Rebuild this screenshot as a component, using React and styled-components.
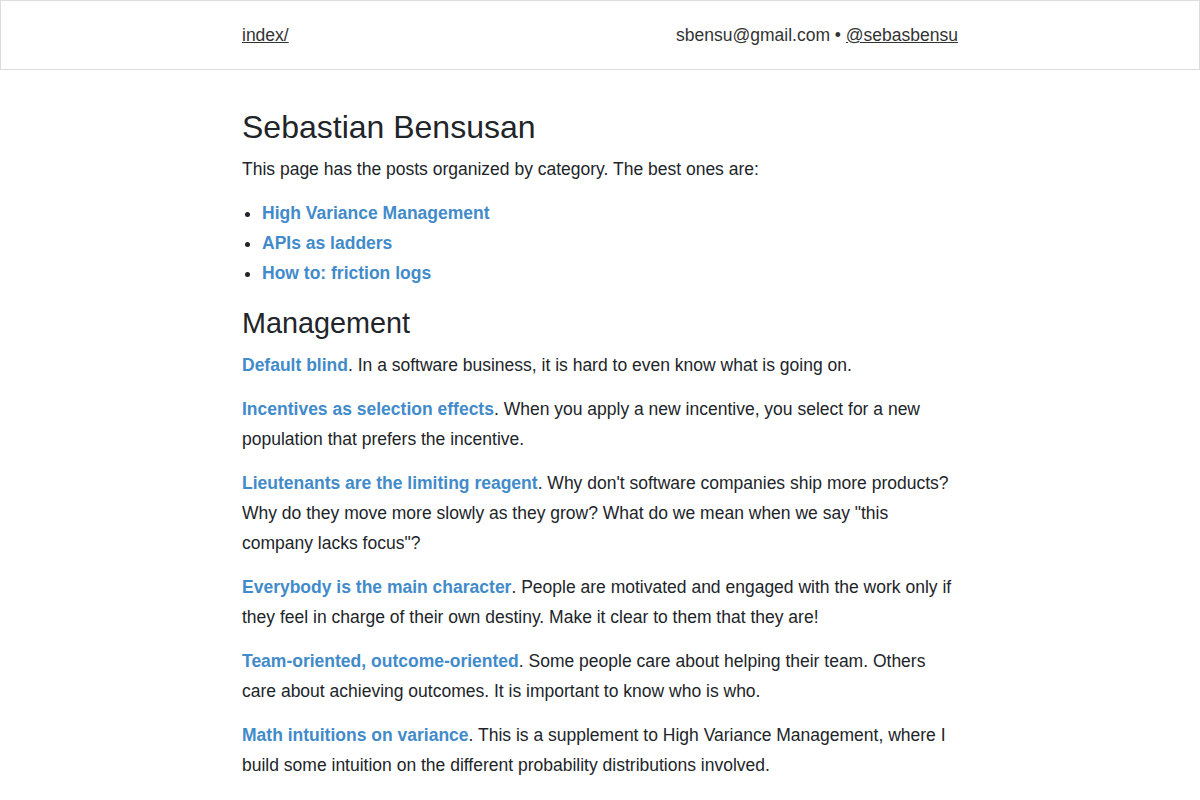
import React from 'react'
import styled, { createGlobalStyle } from 'styled-components'

const posts = [
  {
    title: 'Default blind',
    text: 'In a software business, it is hard to even know what is going on.',
  },
  {
    title: 'Incentives as selection effects',
    text: 'When you apply a new incentive, you select for a new population that prefers the incentive.',
  },
  {
    title: 'Lieutenants are the limiting reagent',
    text: 'Why don\'t software companies ship more products? Why do they move more slowly as they grow? What do we mean when we say "this company lacks focus"?',
  },
  {
    title: 'Everybody is the main character',
    text: 'People are motivated and engaged with the work only if they feel in charge of their own destiny. Make it clear to them that they are!',
  },
  {
    title: 'Team-oriented, outcome-oriented',
    text: 'Some people care about helping their team. Others care about achieving outcomes. It is important to know who is who.',
  },
  {
    title: 'Math intuitions on variance',
    text: 'This is a supplement to High Variance Management, where I build some intuition on the different probability distributions involved.',
  },
]

const best = ['High Variance Management', 'APIs as ladders', 'How to: friction logs']

function App() {
  return (
    <>
      <GlobalStyle />
      <Header>
        <HeaderInner>
          <NavLink href="#">index/</NavLink>
          <Contact>
            sbensu@gmail.com • <NavLink href="#">@sebasbensu</NavLink>
          </Contact>
        </HeaderInner>
      </Header>

      <Main>
        <Title>Sebastian Bensusan</Title>
        <Para>This page has the posts organized by category. The best ones are:</Para>
        <BestList>
          {best.map((b) => (
            <li key={b}>
              <PostLink href="#">{b}</PostLink>
            </li>
          ))}
        </BestList>

        <Section>Management</Section>
        {posts.map((p) => (
          <Para key={p.title}>
            <PostLink href="#">{p.title}</PostLink>. {p.text}
          </Para>
        ))}
      </Main>
    </>
  )
}

export default App

const GlobalStyle = createGlobalStyle`
    body {
        margin: 0;
        background: #fff;
        color: #212529;
        font-family: "Liberation Sans", Arial, Helvetica, sans-serif;
        font-size: 17.5px;
        line-height: 30px;
    }
`

const Header = styled.header`
    height: 68px;
    border: 1px solid #dcdcdc;
    display: flex;
    align-items: center;
`

const HeaderInner = styled.div`
    width: 716px;
    margin: 0 auto;
    display: flex;
    justify-content: space-between;
    align-items: center;
    color: #333;
`

const NavLink = styled.a`
    color: #333;
    text-decoration: underline;
`

const Contact = styled.div``

const Main = styled.main`
    width: 716px;
    margin: 0 auto;
    padding-top: 38px;
`

const Title = styled.h1`
    font-size: 32px;
    font-weight: 400;
    line-height: 38px;
    margin: 0 0 8px;
`

const Section = styled.h2`
    font-size: 28.8px;
    font-weight: 400;
    line-height: 34px;
    margin: 18px 0 10px;
`

const Para = styled.p`
    margin: 0 0 14px;
`

const BestList = styled.ul`
    margin: 0;
    padding-left: 20px;
`

const PostLink = styled.a`
    color: #428bca;
    font-weight: 700;
    text-decoration: none;
`
